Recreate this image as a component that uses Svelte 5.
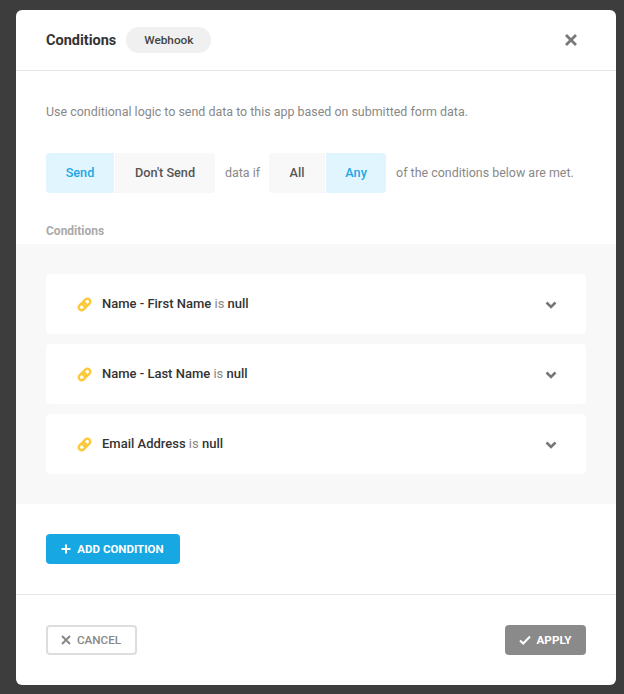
<script lang="ts">
	const conditions = [
		{ field: 'Name - First Name', value: 'null' },
		{ field: 'Name - Last Name', value: 'null' },
		{ field: 'Email Address', value: 'null' }
	];
</script>

<div class="overlay">
	<div class="modal">
		<header>
			<h2>Conditions</h2>
			<span class="pill">Webhook</span>
			<svg class="close" viewBox="0 0 14 14" width="14" height="14" aria-hidden="true">
				<path d="M2 2l10 10M12 2L2 12" />
			</svg>
		</header>

		<div class="intro">
			<p>Use conditional logic to send data to this app based on submitted form data.</p>
			<div class="logic">
				<div class="toggle">
					<span class="active send">Send</span>
					<span class="dont">Don't Send</span>
				</div>
				<span class="note first">data if</span>
				<div class="toggle">
					<span class="all">All</span>
					<span class="active any">Any</span>
				</div>
				<span class="note">of the conditions below are met.</span>
			</div>
			<div class="label">Conditions</div>
		</div>

		<section class="list">
			{#each conditions as c}
				<div class="row">
					<svg class="link" viewBox="0 0 16 16" width="15" height="15" aria-hidden="true">
						<g transform="rotate(-45 8 8)">
							<rect x="0.6" y="4.9" width="8.8" height="6.2" rx="3.1" />
							<rect x="6.6" y="4.9" width="8.8" height="6.2" rx="3.1" />
						</g>
					</svg>
					<span class="text"><b>{c.field}</b> <i>is</i> <b>{c.value}</b></span>
					<svg class="chev" viewBox="0 0 12 8" width="12" height="8" aria-hidden="true">
						<path d="M1.5 1.5L6 6l4.5-4.5" />
					</svg>
				</div>
			{/each}
		</section>

		<div class="add">
			<button class="btn-add">
				<svg viewBox="0 0 10 10" width="10" height="10" aria-hidden="true"><path d="M5 0.5v9M0.5 5h9" /></svg>
				ADD CONDITION
			</button>
		</div>

		<footer>
			<button class="btn-cancel">
				<svg viewBox="0 0 10 10" width="10" height="10" aria-hidden="true"><path d="M1 1l8 8M9 1L1 9" /></svg>
				CANCEL
			</button>
			<button class="btn-apply">
				<svg viewBox="0 0 12 10" width="12" height="10" aria-hidden="true"><path d="M1 5.5L4.2 8.5 11 1.5" /></svg>
				APPLY
			</button>
		</footer>
	</div>
</div>

<style>
	:global(body) {
		background: #3d3d3d;
	}

	.overlay {
		height: 694px;
		padding: 10px 8px 0 16px;
		box-sizing: border-box;
		overflow: hidden;
		font-family: Roboto, 'Liberation Sans', sans-serif;
	}

	.modal {
		width: 600px;
		height: 675px;
		background: #fff;
		border-radius: 6px;
		overflow: hidden;
	}

	header {
		display: flex;
		align-items: center;
		height: 60px;
		padding: 0 38px 0 30px;
		border-bottom: 1px solid #e6e6e6;
	}

	h2 {
		margin: 0;
		font-size: 14.5px;
		font-weight: 700;
		color: #333;
	}

	.pill {
		margin-left: 10px;
		width: 85px;
		text-align: center;
		line-height: 26px;
		border-radius: 13px;
		background: #f0f0f0;
		font-size: 11.8px;
		font-weight: 500;
		color: #444;
	}

	.close {
		margin-left: auto;
		fill: none;
		stroke: #777;
		stroke-width: 2.8;
	}

	.intro {
		padding: 0 30px;
	}

	p {
		margin: 0;
		padding-top: 32px;
		font-size: 12.45px;
		line-height: 17px;
		color: #888;
	}

	.logic {
		display: flex;
		align-items: center;
		margin-top: 33px;
		font-size: 12.45px;
	}

	.toggle {
		display: flex;
		gap: 1px;
		font-size: 12.7px;
		font-weight: 500;
		color: #555;
	}

	.toggle span {
		display: block;
		height: 40px;
		line-height: 39px;
		text-align: center;
		background: #f8f8f8;
	}

	.toggle span:first-child {
		border-radius: 4px 0 0 4px;
	}

	.toggle span:last-child {
		border-radius: 0 4px 4px 0;
	}

	.toggle .active {
		background: #e1f5fe;
		color: #1ea7e4;
	}

	.send { width: 68px; }
	.dont { width: 100px; }
	.all { width: 56px; }
	.any { width: 60px; }

	.note {
		margin-left: 10px;
		padding-bottom: 2px;
		color: #888;
		white-space: nowrap;
	}

	.note.first {
		margin-right: 9px;
	}

	.label {
		margin-top: 31px;
		font-size: 12px;
		font-weight: 700;
		line-height: 14px;
		color: #aaa;
	}

	.list {
		display: flex;
		flex-direction: column;
		gap: 10px;
		margin-top: 6px;
		padding: 30px;
		background: #f8f8f8;
	}

	.row {
		display: flex;
		align-items: center;
		height: 60px;
		padding: 0 29px 0 31px;
		background: #fff;
		border-radius: 4px;
	}

	.link {
		fill: none;
		stroke: #fdc83a;
		stroke-width: 2.6;
	}

	.text {
		margin-left: 10px;
		padding-bottom: 2px;
		font-size: 13px;
		color: #333;
	}

	.text b {
		font-weight: 500;
	}

	.text i {
		font-style: normal;
		color: #888;
	}

	.chev {
		margin-left: auto;
		margin-top: 2px;
		fill: none;
		stroke: #777;
		stroke-width: 2.6;
	}

	.add {
		padding: 30px;
	}

	button {
		display: flex;
		align-items: center;
		justify-content: center;
		gap: 6px;
		height: 30px;
		padding: 0;
		border: 0;
		border-radius: 4px;
		box-sizing: border-box;
		font-family: inherit;
		font-size: 11.7px;
		font-weight: 700;
	}

	button svg {
		fill: none;
		stroke: currentColor;
		stroke-width: 2;
	}

	.btn-add {
		width: 134px;
		padding-right: 1px;
		background: #17a8e3;
		color: #fff;
		font-size: 11.5px;
	}

	footer {
		display: flex;
		justify-content: space-between;
		padding: 30px;
		border-top: 1px solid #e6e6e6;
	}

	.btn-cancel {
		width: 91px;
		padding-right: 1px;
		background: #fff;
		border: 2px solid #ddd;
		color: #888;
		font-weight: 500;
	}

	.btn-apply {
		width: 81px;
		padding-right: 1px;
		background: #8a8a8a;
		color: #fff;
	}
</style>
